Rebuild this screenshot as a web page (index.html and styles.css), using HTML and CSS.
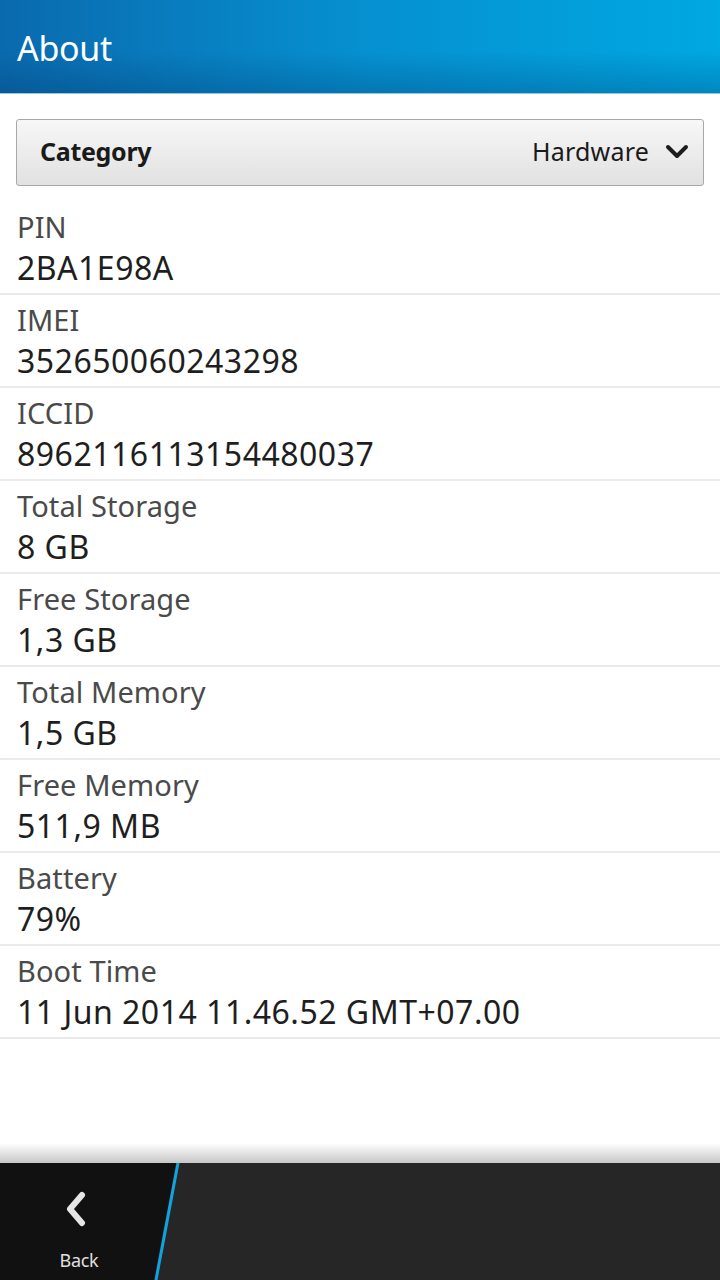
FILE: index.html
```html
<!DOCTYPE html>
<html>
<head>
<meta charset="utf-8">
<link rel="stylesheet" href="styles.css">
</head>
<body>
<div class="screen">
  <header class="titlebar"><h1 class="title">About</h1></header>
  <main class="content">
    <div class="dropdown">
      <span class="dd-label">Category</span>
      <span class="dd-value">Hardware
        <svg class="chev" width="24" height="16" viewBox="0 0 24 16"><path d="M3 3 L12 12 L21 3" fill="none" stroke="#1c1c1c" stroke-width="4" stroke-linecap="round" stroke-linejoin="round"/></svg>
      </span>
    </div>
    <ul class="list">
      <li class="row"><div class="label">PIN</div><div class="value">2BA1E98A</div></li>
      <li class="row"><div class="label">IMEI</div><div class="value">352650060243298</div></li>
      <li class="row"><div class="label">ICCID</div><div class="value">8962116113154480037</div></li>
      <li class="row"><div class="label">Total Storage</div><div class="value">8 GB</div></li>
      <li class="row"><div class="label">Free Storage</div><div class="value">1,3 GB</div></li>
      <li class="row"><div class="label">Total Memory</div><div class="value">1,5 GB</div></li>
      <li class="row"><div class="label">Free Memory</div><div class="value">511,9 MB</div></li>
      <li class="row"><div class="label">Battery</div><div class="value">79%</div></li>
      <li class="row"><div class="label">Boot Time</div><div class="value">11 Jun 2014 11.46.52 GMT+07.00</div></li>
    </ul>
  </main>
  <footer class="actionbar">
    <div class="back">
      <svg class="back-icon" width="28" height="36" viewBox="0 0 28 36"><path d="M20 4 L8 18 L20 32" fill="none" stroke="#e6e6e6" stroke-width="6" stroke-linecap="round" stroke-linejoin="round"/></svg>
      <span class="back-text">Back</span>
    </div>
    <svg class="divider" width="30" height="117" viewBox="0 0 30 117"><polygon points="0,117 22,0 30,0 30,117" fill="#262626"/><line x1="24" y1="0" x2="2" y2="117" stroke="#10a3e0" stroke-width="3"/></svg>
    <div class="rest"></div>
  </footer>
</div>
</body>
</html>
```
FILE: styles.css
```css
* { box-sizing: border-box; margin: 0; padding: 0; }
html, body { width: 720px; height: 1280px; overflow: hidden; background: #fff; }
body { font-family: "Noto Sans", "Open Sans", sans-serif; }
.screen { width: 720px; height: 1280px; display: flex; flex-direction: column; }
.titlebar {
  height: 94px;
  background: linear-gradient(to bottom, rgba(0,0,0,0) 55%, rgba(0,40,90,0.25) 100%),
              linear-gradient(to right, #0a6aae 0%, #0690d0 50%, #00a8e2 100%);
  border-bottom: 1px solid #9cc4dc;
  padding-left: 17px;
  display: flex; align-items: center;
}
.title { color: #fff; font-weight: 400; font-size: 34px; letter-spacing: -0.3px; margin-top: 2px; }
.content { flex: 1; padding-top: 25px; display: flex; flex-direction: column; position: relative; }
.content::after {
  content: ""; position: absolute; left: 0; right: 0; bottom: 0; height: 20px;
  background: linear-gradient(to bottom, rgba(0,0,0,0), rgba(0,0,0,0.22));
}
.dropdown {
  margin: 0 16px 0 16px; height: 67px;
  border: 1px solid #a8a8a8; border-radius: 3px;
  background: linear-gradient(to bottom, #f7f7f7, #e1e1e1);
  display: flex; align-items: center; justify-content: space-between;
  padding: 0 14px 0 23px;
}
.dd-label { font-weight: 700; font-size: 25px; color: #1a1a1a; letter-spacing: -0.3px; margin-top: -3px; }
.dd-value { font-size: 25px; color: #1a1a1a; display: flex; align-items: center; gap: 16px; letter-spacing: 0.2px; margin-top: -3px; }
.chev { display: block; margin-top: 2px; }
.list { list-style: none; margin-top: 16px; }
.row { height: 93px; border-bottom: 2px solid #ebebeb; padding: 7px 17px 0 17px; }
.label { font-size: 29px; color: #4a4a4a; line-height: 36px; letter-spacing: 0.1px; }
.value { font-size: 32px; color: #1e1e1e; line-height: 46px; letter-spacing: 0.5px; }
.actionbar { height: 117px; background: #262626; display: flex; }
.back { width: 154px; background: #111; display: flex; flex-direction: column; align-items: center; padding-top: 28px; padding-left: 4px; }
.back-icon { display: block; margin-left: -6px; }
.back-text { color: #e0e0e0; font-size: 18px; margin-top: 21px; letter-spacing: -0.3px; }
.divider { display: block; background: #111; }
.rest { flex: 1; }
```
